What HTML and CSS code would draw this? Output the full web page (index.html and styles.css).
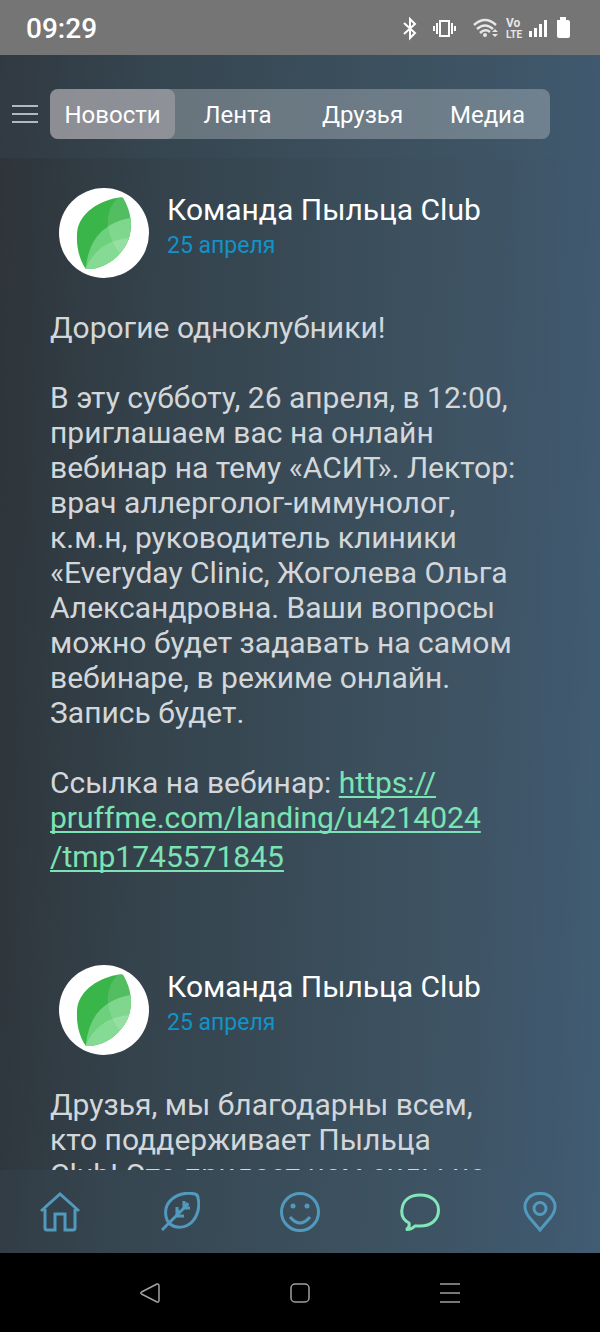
FILE: index.html
```html
<!DOCTYPE html>
<html lang="ru">
<head>
    <meta charset="UTF-8">
    <meta name="viewport" content="width=device-width, initial-scale=1.0">
    <title>Пыльца Club - Новости</title>
    <link rel="stylesheet" href="styles.css">
</head>
<body>

    <!-- Shared leaf logo -->
    <svg class="sprite" aria-hidden="true">
        <symbol id="leaf-logo" viewBox="0 0 270 270">
            <clipPath id="leaf-shape">
                <path d="M184 28 Q190 26 193 31 C219 75 224 127 202 169 C180 210 135 244 84 243 Q79 243 77 238 C58 207 50 165 55 127 C64 75 120 37 184 28Z"/>
            </clipPath>
            <g clip-path="url(#leaf-shape)">
                <rect width="270" height="270" fill="#3ab54a"/>
                <path d="M80 245 Q90 108 225 88 L270 270Z" fill="#6dd07d"/>
                <path d="M78 246 Q118 150 225 150 L270 270Z" fill="#86db94"/>
                <path d="M188 20 C132 60 132 140 190 205 L270 200 V0Z" fill="#fff" fill-opacity="0.13"/>
            </g>
        </symbol>
    </svg>

    <!-- Phone status bar -->
    <div class="status-bar">
        <span class="clock">09:29</span>
        <svg class="status-icons" viewBox="0 0 170 24" fill="none" stroke="#fff" stroke-width="2" aria-hidden="true">
            <path d="M4 6 L15 16 L10 21 V2 L15 7 L4 17"/>
            <rect x="40" y="4" width="9" height="15" stroke-width="2"/>
            <path d="M37 6 V17 M34 9 V14 M52 6 V17 M55 9 V14"/>
            <path d="M74 8 Q85 -2 96 8 M77 12 Q85 5 93 12 M80 16 Q85 11 90 15" stroke="#e6e6e6" stroke-width="2.500"/>
            <circle cx="85" cy="18" r="2" fill="#e6e6e6" stroke="none"/>
            <path d="M92 15 L95 12 L98 15Z M92 17 L95 20 L98 17Z" fill="#e6e6e6" stroke="none"/>
            <g fill="#e6e6e6" stroke="none">
                <text class="volte vo" x="106" y="10">Vo</text>
                <text class="volte" x="106" y="21">LTE</text>
            </g>
            <path d="M130.500 20 V14 M135.500 20 V11 M140.500 20 V7 M145.500 20 V3" stroke-width="3"/>
            <path d="M157 3 H160 V0 H166 V3 H168 Q170 3 170 5 V19 Q170 21 168 21 H159 Q157 21 157 19Z" fill="#fff" stroke="none"/>
        </svg>
    </div>

    <div class="app">
        <header class="top-bar">
            <button class="menu-btn" aria-label="Меню">
                <svg viewBox="0 0 26 20" stroke="#d9e2e6" stroke-width="1.500">
                    <path d="M0 2 H26 M0 10 H26 M0 18 H26"/>
                </svg>
            </button>
            <nav class="tabs">
                <button class="tab active">Новости</button>
                <button class="tab">Лента</button>
                <button class="tab">Друзья</button>
                <button class="tab">Медиа</button>
            </nav>
        </header>

        <main class="feed">
            <article class="post">
                <div class="post-header">
                    <svg class="avatar"><use href="#leaf-logo"/></svg>
                    <div>
                        <h2 class="author">Команда Пыльца Club</h2>
                        <time class="date" datetime="2025-04-25">25 апреля</time>
                    </div>
                </div>
                <div class="post-text">
                    <p>Дорогие одноклубники!</p>
                    <p>В эту субботу, 26 апреля, в 12:00, приглашаем вас на онлайн вебинар на тему «АСИТ». Лектор: врач аллерголог-иммунолог, к.м.н, руководитель клиники «Everyday Clinic, Жоголева Ольга Александровна. Ваши вопросы можно будет задавать на самом вебинаре, в режиме онлайн. Запись будет.</p>
                    <p>Ссылка на вебинар: <a href="https://pruffme.com/landing/u4214024/tmp1745571845">https://<wbr>pruffme.com/landing/u4214024<wbr><span class="url-end">/tmp1745571845</span></a></p>
                </div>
            </article>

            <article class="post">
                <div class="post-header">
                    <svg class="avatar"><use href="#leaf-logo"/></svg>
                    <div>
                        <h2 class="author">Команда Пыльца Club</h2>
                        <time class="date" datetime="2025-04-25">25 апреля</time>
                    </div>
                </div>
                <div class="post-text">
                    <p>Друзья, мы благодарны всем, кто поддерживает Пыльца Club!&nbsp;Это придает нам силы не</p>
                </div>
            </article>
        </main>

        <!-- Bottom navigation -->
        <nav class="bottom-nav">
            <a href="#" aria-label="Главная">
                <svg viewBox="0 0 40 40">
                    <path d="M1 19 L20 2 L39 19 M5 17 V36 Q5 38 7 38 H15 V22 H25 V38 H33 Q35 38 35 36 V17"/>
                </svg>
            </a>
            <a href="#" aria-label="Пыление">
                <svg viewBox="0 0 40 40">
                    <path d="M2 38 L28 12 M10 32 C4 26 4 14 11 8 C17 2 27 0 35 2 Q38 3 38 6 C40 14 38 24 32 30 C26 36 16 37 10 32Z"/>
                    <path d="M24 9 V16 H30 M28 11 L24 16 M17 15 V24 H24 M17 17 L19 22"/>
                </svg>
            </a>
            <a href="#" aria-label="Самочувствие">
                <svg viewBox="0 0 40 40">
                    <circle cx="20" cy="20" r="18.500"/>
                    <path d="M10 25 Q20 37 30 25"/>
                    <circle class="dot" cx="13" cy="14" r="2.500"/>
                    <circle class="dot" cx="27" cy="14" r="2.500"/>
                </svg>
            </a>
            <a href="#" class="current" aria-label="Сообщество">
                <svg viewBox="0 0 40 40">
                    <path d="M9 31 C3 28 1 23 2 17 C3 8 10 3 20 3 C31 3 38.500 9 38.500 18 C38.500 28 31 34 20 34 H15 Q11 38 6 37.500 Q10 36 9 31Z"/>
                </svg>
            </a>
            <a href="#" aria-label="Карта">
                <svg viewBox="0 0 40 40">
                    <path d="M20 38 L9 25 C-1 11 10 1 20 1.500 C30 1 41 11 31 25Z"/>
                    <circle cx="20" cy="16.500" r="6"/>
                </svg>
            </a>
        </nav>
    </div>

    <!-- System buttons -->
    <div class="system-nav">
        <button aria-label="Назад">
            <svg viewBox="0 0 20 20"><path d="M17 1 L1.500 9 Q0 10 1.500 11 L17 19 Q19 19.500 19 17 V3 Q19 0.500 17 1Z"/></svg>
        </button>
        <button aria-label="Домой">
            <svg viewBox="0 0 20 20"><rect x="1" y="1" width="18" height="18" rx="4"/></svg>
        </button>
        <button aria-label="Недавние">
            <svg viewBox="0 0 20 20"><path d="M0 1 H20 M0 10 H20 M0 19 H20"/></svg>
        </button>
    </div>

</body>
</html>
```
FILE: styles.css
```css
* {
    box-sizing: border-box;
}

body {
    font-family: Roboto, sans-serif;
    margin: 0;
    height: 100vh;
    display: flex;
    flex-direction: column;
    overflow: hidden;
    background: #000;
    color: white;
}

button {
    background: none;
    border: none;
    padding: 0;
    font-family: inherit;
    color: inherit;
    cursor: pointer;
}

svg {
    display: block;
}

.sprite {
    position: absolute;
    width: 0;
    height: 0;
}

/* Status bar */
.status-bar {
    display: flex;
    flex-shrink: 0;
    justify-content: space-between;
    align-items: center;
    height: 55px;
    padding: 2px 30px 0 26px;
    background: #757575;
}

.clock {
    font-size: 28px;
    font-weight: 500;
}

.status-icons {
    width: 170px;
    height: 24px;
}

.volte {
    font-size: 10px;
    font-weight: 700;
}

.volte.vo {
    font-size: 12px;
}

/* App */
.app {
    flex: 1;
    min-height: 0;
    display: flex;
    flex-direction: column;
    background: linear-gradient(92deg, #2e343a 0%, #34424b 25%, #394b57 50%, #3e5363 75%, #40586e 92%, #415d73 100%);
}

.top-bar {
    display: flex;
    align-items: center;
    gap: 12px;
    padding: 34px 50px 19px 12px;
    background: rgba(65, 93, 115, 0.15);
}

.menu-btn svg {
    width: 26px;
    height: 20px;
}

.tabs {
    flex: 1;
    display: flex;
    height: 50px;
    border-radius: 8px;
    background: rgba(255, 255, 255, 0.25);
}

.tab {
    flex: 1;
    padding-top: 2px;
    font-size: 24px;
    border-radius: 8px;
}

.tab.active {
    background: rgba(180, 174, 180, 0.5);
}

/* Feed */
.feed {
    flex: 1;
    min-height: 0;
    overflow: hidden;
    padding: 30px 50px 0;
}

.post {
    margin-bottom: 87px;
}

.post-header {
    display: flex;
    gap: 18px;
    padding-left: 9px;
    margin-bottom: 32px;
}

.avatar {
    width: 90px;
    height: 90px;
    border-radius: 50%;
    background: white;
}

.author {
    margin: 4px 0 0;
    font-size: 30px;
    font-weight: 400;
    line-height: 36px;
}

.date {
    display: block;
    font-size: 23px;
    line-height: 36px;
    color: #1292c8;
}

.post-text {
    padding-right: 30px;
    font-size: 30px;
    line-height: 35px;
    color: #d3d7da;
}

.post-text p {
    margin: 0 0 35px;
}

.post-text p:last-child {
    margin-bottom: 0;
}

.post-text a {
    color: #7be3b4;
    text-decoration-thickness: 2px;
    text-underline-offset: 3px;
    text-decoration-skip-ink: none;
}

.url-end {
    line-height: 43px;
}

/* Bottom navigation */
.bottom-nav {
    display: flex;
    align-items: center;
    height: 83px;
    background: rgba(65, 93, 115, 0.15);
}

.bottom-nav a {
    flex: 1;
    display: flex;
    justify-content: center;
    color: #519abd;
}

.bottom-nav a.current {
    color: #82e6b9;
}

.bottom-nav svg {
    width: 40px;
    height: 40px;
    fill: none;
    stroke: currentColor;
    stroke-width: 3;
}

.bottom-nav .dot {
    fill: currentColor;
    stroke: none;
}

/* System buttons */
.system-nav {
    display: flex;
    flex-shrink: 0;
    justify-content: center;
    align-items: center;
    gap: 130px;
    height: 79px;
}

.system-nav svg {
    width: 20px;
    height: 20px;
    fill: none;
    stroke: #a0a0a0;
    stroke-width: 1.500;
}
```
